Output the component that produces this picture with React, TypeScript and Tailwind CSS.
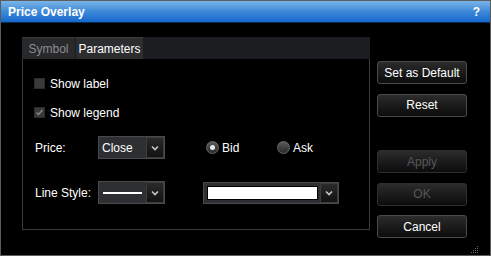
import React from "react";

const font = { fontFamily: "'Liberation Sans', Arial, sans-serif" };

function Chevron() {
  return (
    <svg width="8" height="6" viewBox="0 0 8 6" className="block">
      <path d="M1 1.5 L4 4.5 L7 1.5" stroke="#c8c8c8" strokeWidth="1.6" fill="none" />
    </svg>
  );
}

function ArrowBox() {
  return (
    <div className="flex h-full w-[18px] items-center justify-center border border-[#3c3c3c] bg-gradient-to-b from-[#2a2a2a] to-[#121212]">
      <Chevron />
    </div>
  );
}

function Check({ checked, label }: { checked?: boolean; label: string }) {
  return (
    <div className="flex h-[11px] items-center gap-[5px]">
      <div className="flex h-[11px] w-[11px] items-center justify-center bg-[#3a3a3a] border border-[#2c2c2c]">
        {checked && (
          <svg width="9" height="9" viewBox="0 0 9 9">
            <path d="M1.5 4.5 L3.5 6.5 L7.5 2" stroke="#8a8a8a" strokeWidth="1.3" fill="none" />
          </svg>
        )}
      </div>
      <span className="text-[12px] text-white leading-none">{label}</span>
    </div>
  );
}

function Radio({ on, label }: { on?: boolean; label: string }) {
  return (
    <div className="flex w-[71px] items-center gap-[3px]">
      <div className="flex h-[13px] w-[13px] items-center justify-center rounded-full border border-[#6a6a6a] bg-gradient-to-b from-[#5a5a5a] to-[#2a2a2a]">
        {on && <div className="h-[5px] w-[5px] rounded-full bg-[#e8e8e8]" />}
      </div>
      <span className="text-[12px] text-white leading-none">{label}</span>
    </div>
  );
}

function Btn({ label, off }: { label: string; off?: boolean }) {
  return (
    <button
      className={`h-[23px] w-[90px] rounded-[3px] border bg-gradient-to-b from-[#2c2c2c] to-[#0c0c0c] text-[12px] ${
        off ? "border-[#2e2e2e] text-[#575757]" : "border-[#4a4a4a] text-white"
      }`}
    >
      {label}
    </button>
  );
}

export default function App() {
  return (
    <div style={font} className="h-[256px] w-[491px] border border-[#5c5c5c] bg-black flex flex-col">
      {/* Title */}
      <div className="flex h-[22px] items-center justify-between border-b border-[#0c2c55] bg-gradient-to-b from-[#7ab4e6] via-[#3d8ad8] to-[#1566cc] pl-[7px] pr-[10px]">
        <span className="text-[12px] font-bold text-white">Price Overlay</span>
        <span className="text-[12px] font-bold text-white">?</span>
      </div>

      <div className="flex flex-1 pl-[21px] pt-[14px]">
        {/* Tabbed panel */}
        <div className="flex w-[348px] flex-col">
          <div className="flex h-[22px] items-end gap-px bg-[#1c1d20]">
            <div className="flex h-[22px] w-[53px] items-center justify-center border-t border-[#3a3a3c] bg-[#28292b] pt-px text-[12px] text-[#8c8c8c]">
              Symbol
            </div>
            <div className="flex h-[22px] w-[67px] items-center justify-center border-t border-[#3e3e40] bg-[#2c2d2f] pt-px text-[12px] text-white">
              Parameters
            </div>
          </div>
          <div className="flex h-[171px] flex-col border border-t-0 border-[#3a3a3a] pl-[11px]">
            <div className="mt-[19px]">
              <Check label="Show label" />
            </div>
            <div className="mt-[18px]">
              <Check checked label="Show legend" />
            </div>

            <div className="mt-[18px] flex items-center">
              <span className="ml-px w-[63px] text-[12px] text-white">Price:</span>
              <div className="flex h-[23px] w-[67px] items-center border border-[#4a4a4a] bg-[#2e2f33]">
                <span className="flex-1 pl-[3px] text-[12px] text-white">Close</span>
                <ArrowBox />
              </div>
              <div className="ml-[41px] flex">
                <Radio on label="Bid" />
                <Radio label="Ask" />
              </div>
            </div>

            <div className="mt-[22px] flex items-center">
              <span className="ml-px w-[63px] text-[12px] text-white">Line Style:</span>
              <div className="flex h-[23px] w-[67px] items-center border border-[#4a4a4a] bg-[#2e2f33]">
                <div className="flex-1 pl-[4px] pr-[4px]">
                  <div className="h-[2px] bg-white" />
                </div>
                <ArrowBox />
              </div>
              <div className="ml-[38px] flex h-[22px] w-[136px] items-center gap-[2px] border border-[#4a4a4a] bg-[#2e2f33] pl-[3px]">
                <div className="h-[14px] flex-1 border border-black bg-white" />
                <ArrowBox />
              </div>
            </div>
          </div>
        </div>

        {/* Buttons */}
        <div className="ml-[7px] flex flex-col pt-[24px]">
          <Btn label="Set as Default" />
          <div className="mt-[8px]">
            <Btn label="Reset" />
          </div>
          <div className="mt-[32px]">
            <Btn label="Apply" off />
          </div>
          <div className="mt-[8px]">
            <Btn label="OK" off />
          </div>
          <div className="mt-[8px]">
            <Btn label="Cancel" />
          </div>
          <div className="mt-[7px] flex justify-end">
            <svg width="9" height="9" viewBox="0 0 9 9" className="translate-x-[12px]">
              {[
                [7, 1], [5, 3], [7, 3], [3, 5], [5, 5], [7, 5], [1, 7], [3, 7], [5, 7], [7, 7],
              ].map(([x, y], i) => (
                <rect key={i} x={x} y={y} width="1" height="1" fill="#6a6a6a" />
              ))}
            </svg>
          </div>
        </div>
      </div>
    </div>
  );
}
